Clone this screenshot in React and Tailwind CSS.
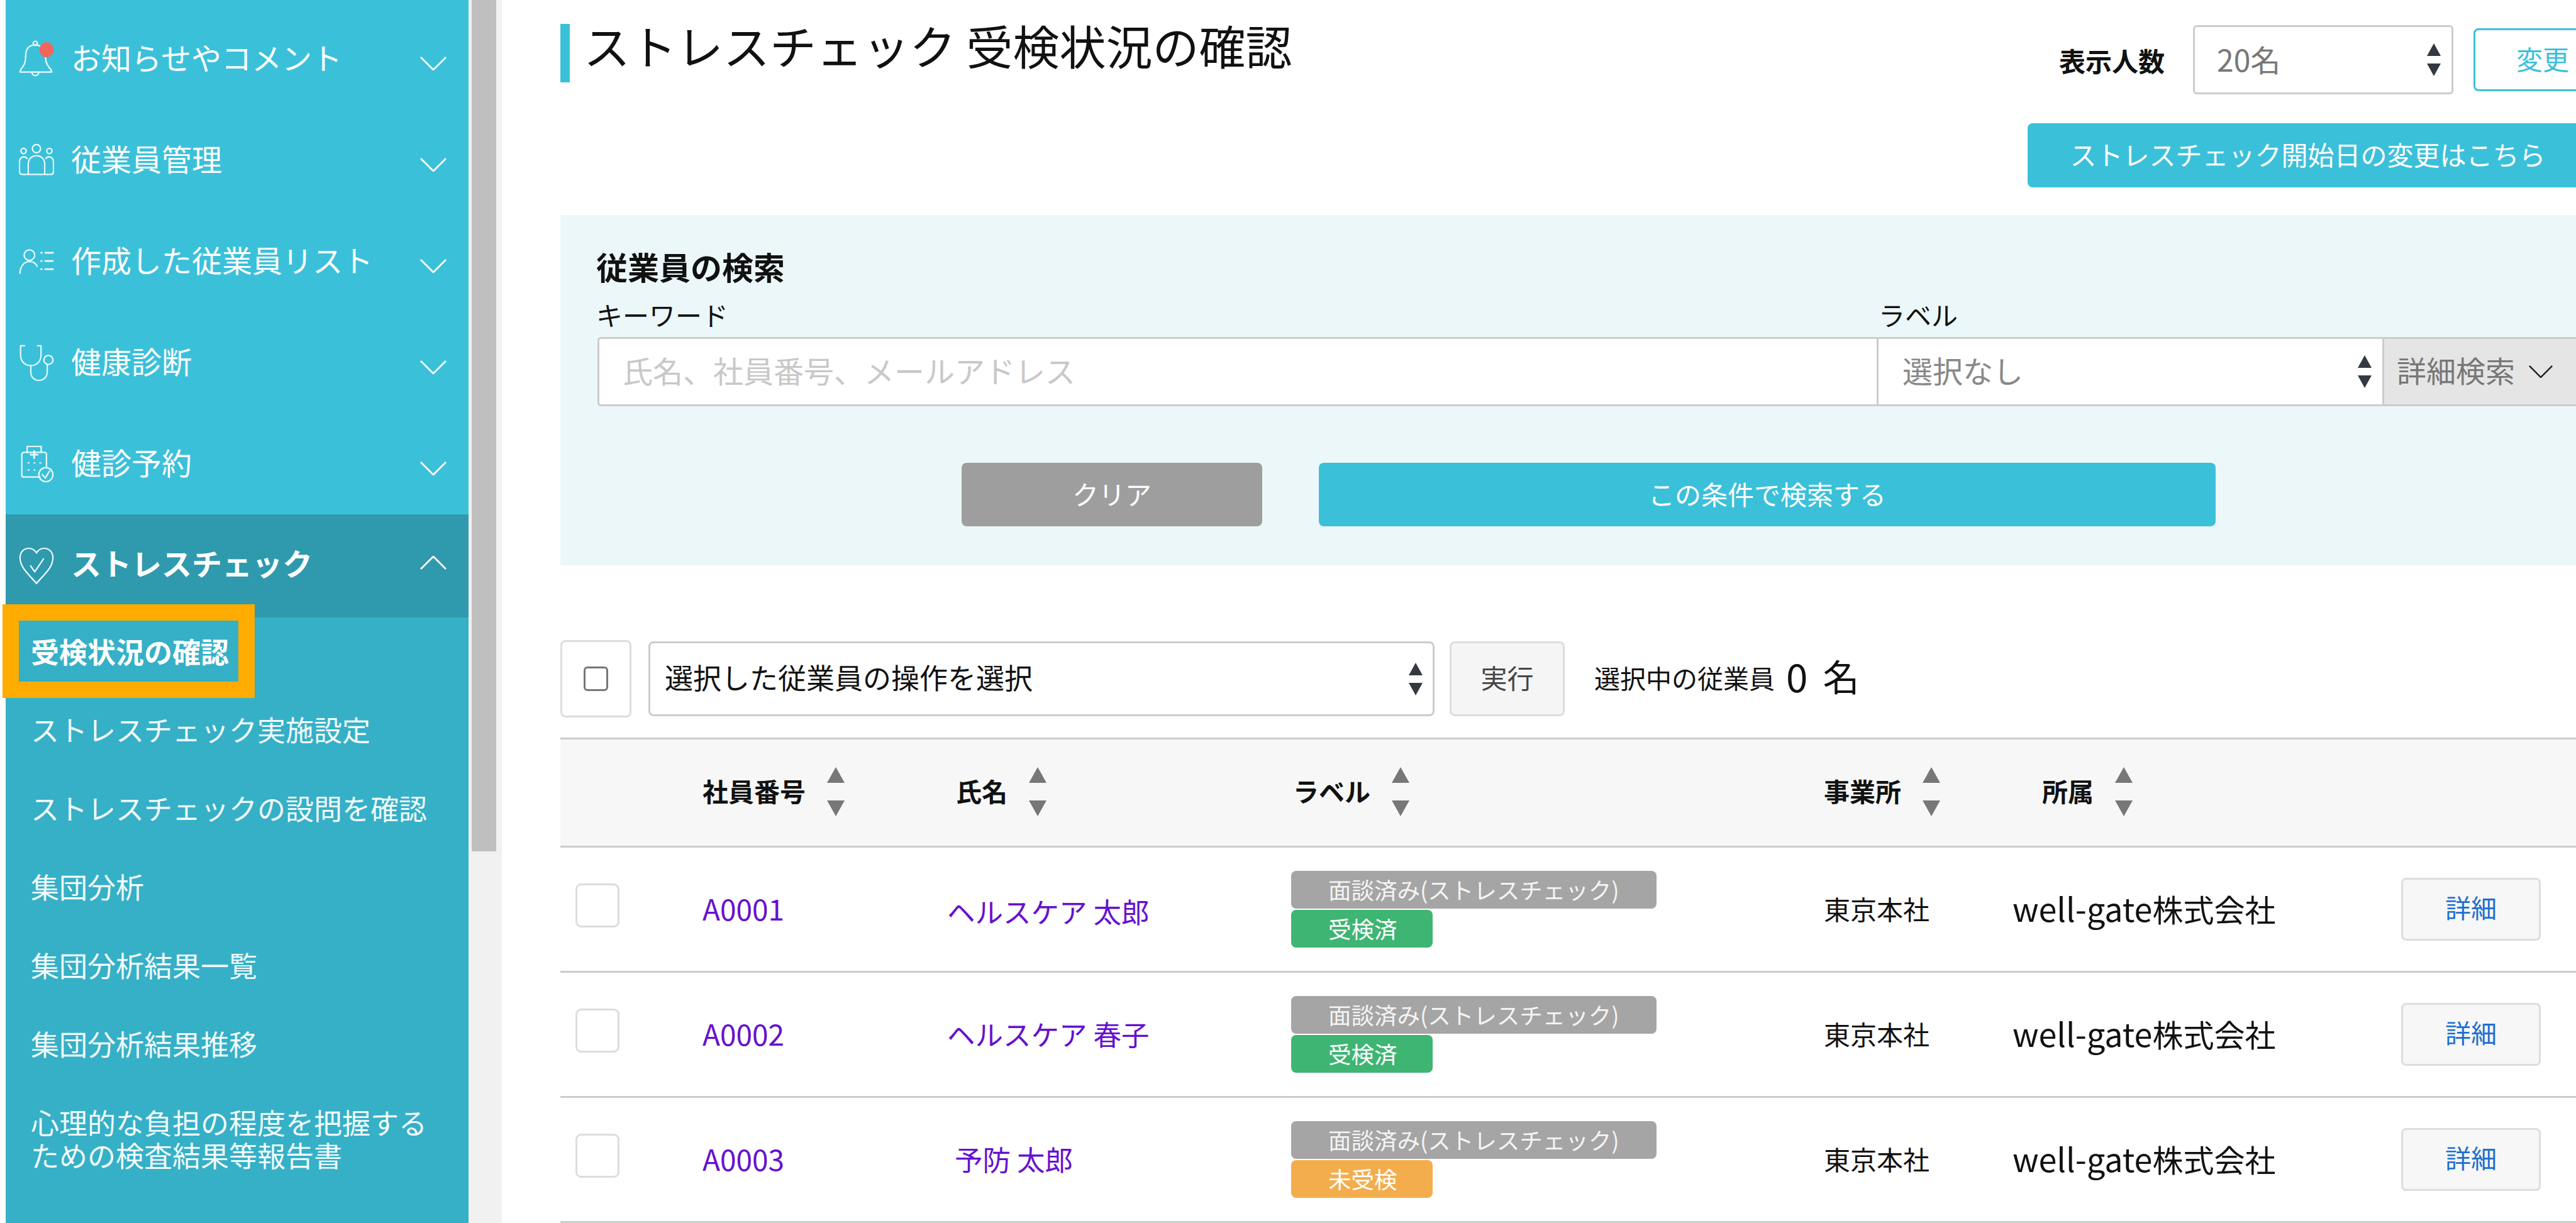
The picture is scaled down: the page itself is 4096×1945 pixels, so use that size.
const NAV = [
  { label: 'お知らせやコメント', icon: 'bell' },
  { label: '従業員管理', icon: 'people' },
  { label: '作成した従業員リスト', icon: 'list' },
  { label: '健康診断', icon: 'stetho' },
  { label: '健診予約', icon: 'clinic' },
];

const SUB = ['ストレスチェック実施設定', 'ストレスチェックの設問を確認', '集団分析', '集団分析結果一覧', '集団分析結果推移'];

const ROWS = [
  { id: 'A0001', name: 'ヘルスケア 太郎', status: '受検済', statusBg: 'bg-[#3fb573]', nameClass: 'pt-[6px]' },
  { id: 'A0002', name: 'ヘルスケア 春子', status: '受検済', statusBg: 'bg-[#3fb573]', nameClass: 'pb-[2px]' },
  { id: 'A0003', name: '予防 太郎', status: '未受検', statusBg: 'bg-[#f4ad4d]', nameClass: 'pl-[12px] pb-[2px]' },
];

function NavIcon({ name }) {
  const common = {
    fill: 'none',
    stroke: '#eafaff',
    strokeWidth: 2.4,
    strokeLinecap: 'round',
    strokeLinejoin: 'round',
    className: 'w-[56px] h-[60px] shrink-0',
  };
  if (name === 'bell') {
    return (
      <svg viewBox="0 0 60 64" {...common}>
        <circle cx="28" cy="5" r="3.5" />
        <path d="M2 54C2 48 10 45 11 34L12 22C13 12 20 8 28 8C36 8 42 12 44 22L46 34C47 45 56 48 56 54Z" />
        <path d="M22 54C22 62 34 62 34 54" />
        <ellipse cx="47" cy="16" rx="12" ry="13" fill="#f0665c" stroke="none" />
      </svg>
    );
  }
  if (name === 'people') {
    return (
      <svg viewBox="0 0 60 60" {...common}>
        <circle cx="30" cy="10" r="7" />
        <circle cx="8" cy="14" r="4.5" />
        <circle cx="52" cy="14" r="4.5" />
        <path d="M16 54V36C16 28 22 22 30 22C38 22 44 28 44 36V54Z" />
        <path d="M14 54H6C3 54 1 52 1 49V34C1 28 4 24 8 24C11 24 13 25 14 27" />
        <path d="M46 54H54C57 54 59 52 59 49V34C59 28 56 24 52 24C49 24 47 25 46 27" />
      </svg>
    );
  }
  if (name === 'list') {
    return (
      <svg viewBox="0 0 60 60" {...common}>
        <circle cx="18" cy="19" r="9" />
        <path d="M2 50C2 38 9 30 18 30C24 30 29 33 31 38" />
        <path d="M38 15H39M45 15H58M38 29H39M45 29H58M38 43H39M45 43H58" strokeWidth="3" />
      </svg>
    );
  }
  if (name === 'stetho') {
    return (
      <svg viewBox="0 0 62 64" {...common}>
        <path d="M10 2H3V18C3 30 11 37 21 37C31 37 39 30 39 18V2H33" />
        <path d="M21 37V48C21 57 27 63 35 63C44 63 50 56 50 48V35" />
        <circle cx="52" cy="27" r="8" />
      </svg>
    );
  }
  if (name === 'clinic') {
    return (
      <svg viewBox="0 0 60 64" {...common}>
        <path d="M14 12V2H38V12" />
        <path d="M26 10V22M20 16H32" strokeWidth="3" />
        <path d="M36 54H8C6 54 5 53 5 51V16C5 13 7 12 9 12H43C45 12 47 13 47 16V36" />
        <path d="M16 30H17M26 30H27M36 30H37M16 42H17M26 42H27" strokeWidth="2.5" />
        <circle cx="46" cy="50" r="12" />
        <path d="M40 50L45 56L52 44" />
      </svg>
    );
  }
  return (
    <svg viewBox="0 0 60 64" {...common}>
      <path d="M30 62C19 48 2 36 2 18C2 8 9 2 17 2C23 2 27 5 30 10C33 5 37 2 43 2C51 2 58 8 58 18C58 36 41 48 30 62Z" />
      <path d="M20 32L27 42L42 20" />
    </svg>
  );
}

function Chevron({ up = false, className = '', size = 'w-[42px] h-[22px]' }) {
  return (
    <svg viewBox="0 0 42 22" fill="none" stroke="currentColor" strokeWidth="2.8" className={`${size} shrink-0 ${className}`}>
      <path d={up ? 'M1 21L21 1L41 21' : 'M1 1L21 21L41 1'} />
    </svg>
  );
}

function SelectArrows({ className = '' }) {
  return (
    <svg viewBox="0 0 22 52" className={`w-[22px] h-[52px] shrink-0 ${className}`}>
      <path d="M11 0L22 20H0Z" fill="#33393f" />
      <path d="M0 32H22L11 52Z" fill="#33393f" />
    </svg>
  );
}

function SortHead({ label, className = '' }) {
  return (
    <div className={`flex items-center gap-[34px] ${className}`}>
      <span className="pb-[6px] text-[41px] font-bold text-[#111]">{label}</span>
      <svg viewBox="0 0 28 78" className="w-[28px] h-[78px] shrink-0 relative top-[-2px]">
        <path d="M14 0L28 25H0Z" fill="#777777" />
        <path d="M0 53H28L14 78Z" fill="#777777" />
      </svg>
    </div>
  );
}

export default function App() {
  return (
    <div className="relative flex w-[4096px] h-[1945px] overflow-hidden bg-white pl-[9px] font-['Noto_Sans_CJK_JP','Noto_Sans',sans-serif]">
      {/* サイドバー */}
      <aside className="flex flex-col w-[736px] shrink-0 bg-[#3bc0da] text-white pt-[13px]">
        {NAV.map((item) => (
          <div key={item.label} className="flex items-center h-[161px] pl-[21px] pr-[35px]">
            <NavIcon name={item.icon} />
            <span className="ml-[27px] mb-[8px] text-[48px] text-white">{item.label}</span>
            <Chevron className="ml-auto mt-[14px]" />
          </div>
        ))}
        <div className="flex items-center h-[164px] pl-[21px] pr-[35px] bg-[#2f9aad]">
          <NavIcon name="heart" />
          <span className="ml-[27px] mb-[12px] text-[48px] font-bold text-white">ストレスチェック</span>
          <Chevron up className="ml-auto mb-[10px]" />
        </div>
        <div className="flex flex-col flex-1 gap-[13px] bg-[#35b0c7] pl-[40px] text-[45px] text-[#f2fbfd]">
          <div className="h-[112px] leading-[108px] font-bold text-white">受検状況の確認</div>
          {SUB.map((label) => (
            <div key={label} className="h-[112px] leading-[106px]">{label}</div>
          ))}
          <div className="pt-[27px] leading-[52px]">
            心理的な負担の程度を把握する
            <br />
            ための検査結果等報告書
          </div>
        </div>
      </aside>

      {/* スクロールバー */}
      <div className="w-[53px] shrink-0 bg-[#f1f1f1] pl-[5px] pr-[9px]">
        <div className="h-[1354px] bg-[#bfbfbf]" />
      </div>

      {/* メイン */}
      <main className="w-[3300px] shrink-0 ml-[93px] text-[#111]">
        <header className="flex items-start h-[342px] pt-[38px] pr-[76px]">
          <h1 className="h-[93px] border-l-[15px] border-[#3bc0da] pl-[22px] text-[74px] leading-[66px] font-normal whitespace-nowrap">
            ストレスチェック 受検状況の確認
          </h1>
          <div className="ml-auto mt-[2px] flex flex-col items-end">
            <div className="flex items-center">
              <span className="text-[42px] font-bold text-[#111]">表示人数</span>
              <div className="ml-[45px] flex items-center justify-between w-[414px] h-[110px] rounded-[6px] border-[3px] border-[#cccccc] bg-white pl-[35px] pr-[17px]">
                <span className="pb-[4px] text-[48px] text-[#777777]">20名</span>
                <SelectArrows />
              </div>
              <div className="ml-[32px] flex items-center justify-center w-[182px] h-[100px] rounded-[8px] border-[3px] border-[#3bc0da] pl-[38px] pb-[6px] text-[42px] text-[#3bc0da]">
                変更
              </div>
            </div>
            <div className="mt-[46px] flex items-center justify-center w-[891px] h-[102px] rounded-[8px] bg-[#3bc0da] pb-[6px] text-[42px] text-white">
              ストレスチェック開始日の変更はこちら
            </div>
          </div>
        </header>

        {/* 従業員の検索 */}
        <section className="h-[557px] bg-[#ecf7f9] pl-[59px] pt-[51px]">
          <h2 className="-ml-[2px] h-[60px] leading-[60px] text-[50px] font-bold text-[#111]">従業員の検索</h2>
          <div className="mt-[24px] flex items-end">
            <div className="w-[2037px]">
              <div className="-ml-[2px] h-[50px] leading-[46px] mb-[9px] text-[42px] text-[#111]">キーワード</div>
              <div className="flex items-center h-[110px] rounded-l-[5px] border-[3px] border-[#cccccc] bg-white pl-[37px] pb-[6px] text-[48px] text-[#c8c8c8]">
                氏名、社員番号、メールアドレス
              </div>
            </div>
            <div className="w-[801px]">
              <div className="h-[50px] leading-[46px] mb-[9px] text-[42px] text-[#111]">ラベル</div>
              <div className="flex items-center justify-between h-[110px] border-y-[3px] border-[#cccccc] bg-white pl-[38px] pr-[17px] text-[48px] text-[#888888]">
                <span className="pb-[6px]">選択なし</span>
                <SelectArrows />
              </div>
            </div>
            <div className="flex items-center w-[350px] h-[110px] border-y-[3px] border-l-[3px] border-[#cccccc] bg-[#e5e5e5] pl-[20px] text-[47px] text-[#777777]">
              <span className="pb-[6px]">詳細検索</span>
              <Chevron size="w-[38px] h-[20px]" className="ml-[22px] text-[#222]" />
            </div>
          </div>
          <div className="mt-[90px] ml-[579px] flex gap-[90px] text-[42px] text-white">
            <div className="flex items-center justify-center w-[478px] h-[101px] rounded-[8px] bg-[#9e9e9e] pb-[5px]">クリア</div>
            <div className="flex items-center justify-center w-[1426px] h-[101px] rounded-[8px] bg-[#3bc0da] pb-[5px]">この条件で検索する</div>
          </div>
        </section>

        {/* 一括操作 */}
        <div className="mt-[119px] flex items-center h-[123px]">
          <div className="flex items-center justify-center w-[113px] h-[123px] rounded-[8px] border-[3px] border-[#dddddd]">
            <div className="w-[39px] h-[39px] rounded-[6px] border-[3px] border-[#767676] bg-white" />
          </div>
          <div className="ml-[27px] flex items-center justify-between w-[1250px] h-[119px] rounded-[8px] border-[3px] border-[#cccccc] pl-[23px] pr-[16px] text-[45px] text-[#111]">
            <span className="pb-[6px]">選択した従業員の操作を選択</span>
            <SelectArrows />
          </div>
          <div className="ml-[24px] flex items-center justify-center w-[183px] h-[119px] rounded-[8px] border-[3px] border-[#dddddd] bg-[#f5f5f5] pb-[6px] text-[42px] text-[#444444]">
            実行
          </div>
          <span className="ml-[47px] pb-[4px] text-[41px] text-[#111]">選択中の従業員</span>
          <span className="ml-[18px] pb-[10px] text-[62px] text-[#111]">0</span>
          <span className="ml-[24px] pb-[10px] text-[58px] text-[#111]">名</span>
        </div>

        {/* テーブル */}
        <div className="mt-[32px] grid grid-cols-[226px_391px_545px_847px_300px_618px_373px] items-center h-[175px] border-y-[3px] border-[#cccccc] bg-[#f7f7f7]">
          <div />
          <SortHead label="社員番号" />
          <SortHead label="氏名" className="pl-[12px]" />
          <SortHead label="ラベル" className="pl-[3px]" />
          <SortHead label="事業所" />
          <SortHead label="所属" className="pl-[47px]" />
          <div />
        </div>
        {ROWS.map((row) => (
          <div key={row.id} className="grid grid-cols-[226px_391px_545px_847px_300px_618px_373px] items-center h-[199px] border-b-[3px] border-[#cccccc]">
            <div className="pl-[24px]">
              <div className="w-[70px] h-[70px] rounded-[9px] border-[3px] border-[#dddddd] bg-white relative top-[-6px]" />
            </div>
            <div className="pb-[4px] text-[46px] text-[#6610d0]">{row.id}</div>
            <div className={`-ml-[2px] text-[44.5px] text-[#6610d0] ${row.nameClass}`}>{row.name}</div>
            <div className="flex flex-col items-start gap-[2px] text-[36.5px] text-[#f4f4f4]">
              <div className="flex items-center w-[581px] h-[60px] rounded-[8px] bg-[#a5a5a5] pl-[59px]">面談済み(ストレスチェック)</div>
              <div className={`flex items-center w-[225px] h-[60px] rounded-[8px] pl-[59px] text-white ${row.statusBg}`}>{row.status}</div>
            </div>
            <div className="pb-[4px] text-[42px] text-[#111]">東京本社</div>
            <div className="pb-[4px] text-[49px] text-[#111]">
              <span className="text-[52px]">well-gate</span>株式会社
            </div>
            <div className="flex items-center justify-center w-[222px] h-[100px] rounded-[8px] border-[3px] border-[#dddddd] bg-[#f7f7f7] pb-[6px] text-[41px] text-[#1e6fd0]">
              詳細
            </div>
          </div>
        ))}
      </main>

      {/* 注釈の枠 */}
      <div className="absolute left-[4px] top-[961px] w-[401px] h-[149px] border-[26px] border-[#ffab00]" />
    </div>
  );
}
